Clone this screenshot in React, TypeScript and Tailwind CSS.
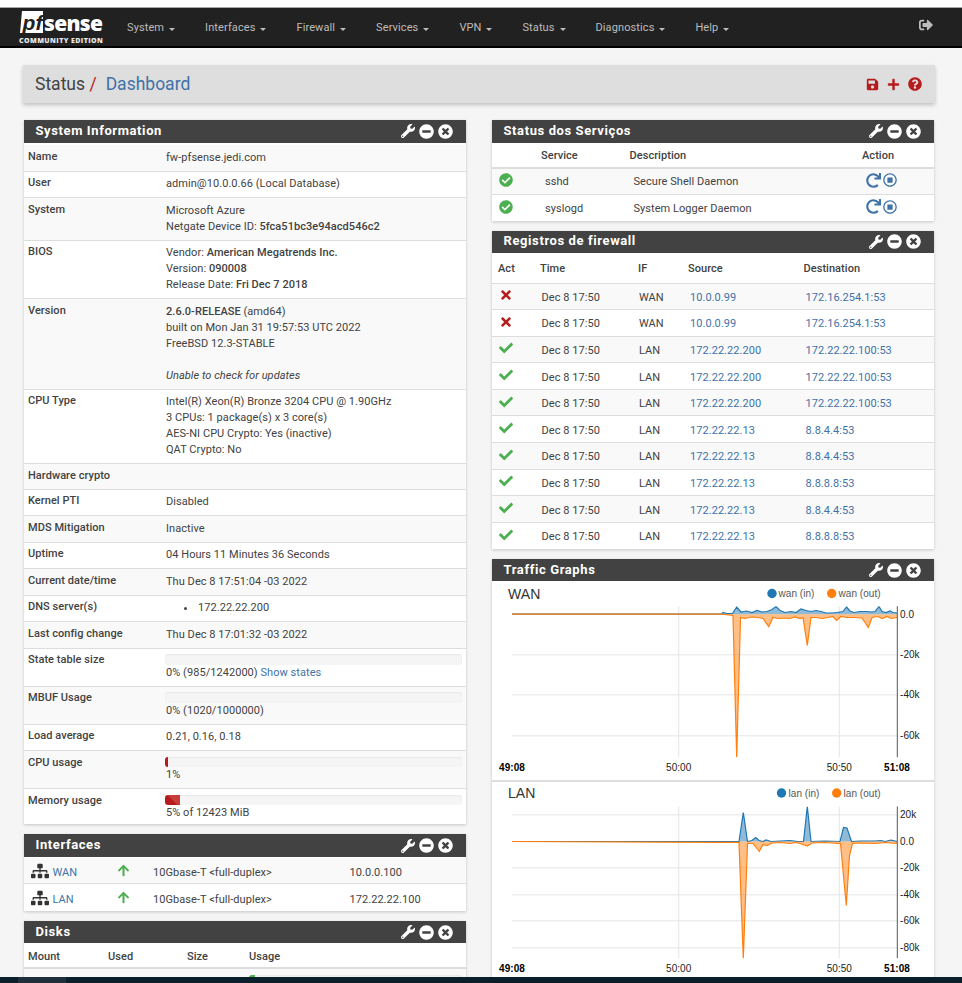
import React from 'react';
import {
  FaWrench, FaMinusCircle, FaTimesCircle, FaSave, FaPlus, FaQuestionCircle, FaCheckCircle,
  FaRedo, FaRegStopCircle, FaTimes, FaCheck, FaArrowUp, FaSitemap, FaSignOutAlt,
} from 'react-icons/fa';

const NAV = ['System', 'Interfaces', 'Firewall', 'Services', 'VPN', 'Status', 'Diagnostics', 'Help'];

type Point = [number, number];

const WAN_IN: Point[] = [
  [512, 613.7], [722, 613.7], [723, 612], [727, 613], [732.5, 613], [736.7, 606.5], [741, 611.5], [746, 610.5],
  [752, 612], [757, 610], [762, 611.5], [767, 611], [772, 609], [776, 606], [780, 610], [785, 612], [791, 611],
  [796, 612], [801, 608.5], [806, 610], [811, 611], [816, 610], [821, 611], [826, 612.5], [832, 612.5], [837, 612],
  [843, 611], [846.5, 606.5], [850, 610.5], [854, 612], [860, 611], [866, 611], [872, 611.5], [875, 611], [879, 606],
  [882, 611], [886, 612], [890, 610.5], [893, 612], [897, 612.5],
];
const WAN_OUT: Point[] = [
  [512, 613.7], [722, 613.7], [733, 615], [736.7, 757], [740.5, 617], [745, 618], [752, 616.5], [758, 617], [763, 618],
  [768.7, 626], [773, 617], [778, 618], [785, 617.5], [790, 618], [795, 616.5], [800, 618], [803, 617], [807.3, 645],
  [811, 617], [816, 617], [822, 618], [828, 617], [833, 616], [836.7, 620], [841, 616], [847, 617], [855, 617],
  [862, 617.5], [868.3, 627], [872, 617], [878, 616], [882, 618], [887, 616], [891, 618], [897, 617],
];
const LAN_IN: Point[] = [
  [512, 841], [739, 841], [743.3, 812], [747.5, 841], [752, 840], [755.7, 837], [759, 840], [763, 841], [766, 839.5],
  [771, 841], [780, 840.5], [790, 840], [798, 841], [803.5, 841], [807.3, 806], [811, 841], [825, 840.5], [840, 841],
  [843.5, 827], [847, 827.5], [851.5, 841], [860, 840.5], [875, 840.5], [881, 840], [885, 841], [891, 839.5], [897, 841],
];
const LAN_OUT: Point[] = [
  [512, 841], [722, 842], [739, 842], [743.3, 958], [747.5, 843], [753, 843], [759.3, 851], [763, 844], [767, 845],
  [772, 842.5], [780, 842], [790, 843], [795, 842], [800, 843], [807.3, 845.5], [812, 842.5], [825, 842], [838, 843],
  [840.5, 843], [846.3, 905], [849.5, 855], [852.5, 843], [860, 842.5], [875, 843], [885, 842], [897, 843],
];

function toLine(points: Point[]) {
  return points.map(([x, y], i) => `${i === 0 ? 'M' : 'L'}${x} ${y}`).join(' ');
}

function toArea(points: Point[], base: number) {
  return `${toLine(points)} L${points[points.length - 1][0]} ${base} L${points[0][0]} ${base} Z`;
}

function PanelTitle({ title }: { title: string }) {
  return (
    <div className="flex h-[22.5px] items-center justify-between bg-[#424242] pl-[11.5px] pr-[13px] text-white">
      <h2 className="pb-[2px] text-[13px] leading-none font-bold tracking-[0.6px]">{title}</h2>
      <div className="flex items-center gap-[4px]">
        <FaWrench size={14} />
        <FaMinusCircle size={15} />
        <FaTimesCircle size={15} />
      </div>
    </div>
  );
}

function Panel({ title, children }: { title: string; children: React.ReactNode }) {
  return (
    <section className="bg-white shadow-[0_1px_3px_rgba(0,0,0,0.2)]">
      <PanelTitle title={title} />
      {children}
    </section>
  );
}

function Bar({ percent, tone = 'bg-[#b71c1c]' }: { percent: number; tone?: string }) {
  return (
    <div className="mt-[1px] -ml-[1px] h-[10.5px] overflow-hidden rounded-[3px] bg-[#f5f5f5] shadow-[inset_0_1px_2px_rgba(0,0,0,0.06)]">
      <div className={`h-full ${tone}`} style={{ width: `${percent}%` }} />
    </div>
  );
}

function InfoRow({ label, odd, children }: { label: string; odd?: boolean; children?: React.ReactNode }) {
  return (
    <div className={`grid grid-cols-[138px_1fr] border-b border-[#ddd] py-[4.75px] pr-[4px] pl-[4px] last:border-b-0 last:pb-[3px] ${odd ? 'bg-[#f9f9f9]' : 'bg-white'}`}>
      <div className="-mt-[1px] font-medium">{label}</div>
      <div>{children}</div>
    </div>
  );
}

function SystemInfo() {
  return (
    <Panel title="System Information">
      <div className="pt-[2.5px]">
        <InfoRow label="Name" odd>fw-pfsense.jedi.com</InfoRow>
        <InfoRow label="User">admin@10.0.0.66 (Local Database)</InfoRow>
        <InfoRow label="System" odd>
          <p>Microsoft Azure</p>
          <p>Netgate Device ID: <strong className="font-medium">5fca51bc3e94acd546c2</strong></p>
        </InfoRow>
        <InfoRow label="BIOS">
          <p>Vendor: <strong className="font-medium">American Megatrends Inc.</strong></p>
          <p>Version: <strong className="font-medium">090008</strong></p>
          <p>Release Date: <strong className="font-medium">Fri Dec 7 2018</strong></p>
        </InfoRow>
        <InfoRow label="Version" odd>
          <p><strong className="font-medium">2.6.0-RELEASE</strong> (amd64)</p>
          <p>built on Mon Jan 31 19:57:53 UTC 2022</p>
          <p>FreeBSD 12.3-STABLE</p>
          <p className="mt-[16px] italic">Unable to check for updates</p>
        </InfoRow>
        <InfoRow label="CPU Type">
          <p>Intel(R) Xeon(R) Bronze 3204 CPU @ 1.90GHz</p>
          <p>3 CPUs: 1 package(s) x 3 core(s)</p>
          <p>AES-NI CPU Crypto: Yes (inactive)</p>
          <p>QAT Crypto: No</p>
        </InfoRow>
        <InfoRow label="Hardware crypto" odd />
        <InfoRow label="Kernel PTI">Disabled</InfoRow>
        <InfoRow label="MDS Mitigation" odd>Inactive</InfoRow>
        <InfoRow label="Uptime">04 Hours 11 Minutes 36 Seconds</InfoRow>
        <InfoRow label="Current date/time" odd>Thu Dec 8 17:51:04 -03 2022</InfoRow>
        <InfoRow label="DNS server(s)">
          <ul className="flex items-center gap-[11px] pl-[18px]">
            <li className="h-[3px] w-[3px] rounded-full bg-[#424242]" />
            <li>172.22.22.200</li>
          </ul>
        </InfoRow>
        <InfoRow label="Last config change" odd>Thu Dec 8 17:01:32 -03 2022</InfoRow>
        <InfoRow label="State table size">
          <Bar percent={0} />
          <p>0% (985/1242000) <a className="text-[#3f72a8]">Show states</a></p>
        </InfoRow>
        <InfoRow label="MBUF Usage" odd>
          <Bar percent={0} />
          <p>0% (1020/1000000)</p>
        </InfoRow>
        <InfoRow label="Load average">0.21, 0.16, 0.18</InfoRow>
        <InfoRow label="CPU usage" odd>
          <Bar percent={1} />
          <p>1%</p>
        </InfoRow>
        <InfoRow label="Memory usage">
          <Bar percent={5} tone="bg-[linear-gradient(45deg,#b71c1c_50%,#c83c3c_50%)]" />
          <p>5% of 12423 MiB</p>
        </InfoRow>
      </div>
    </Panel>
  );
}

function Interfaces() {
  const rows = [
    { name: 'WAN', media: '10Gbase-T <full-duplex>', ip: '10.0.0.100' },
    { name: 'LAN', media: '10Gbase-T <full-duplex>', ip: '172.22.22.100' },
  ];
  return (
    <Panel title="Interfaces">
      <div className="pt-[1px]">
        {rows.map((row, i) => (
          <div key={row.name} className={`grid h-[26.5px] grid-cols-[21.5px_64px_36.5px_196.5px_1fr] items-center border-[#ddd] pl-[7px] ${i === 0 ? 'border-b bg-[#f9f9f9]' : 'bg-white'}`}>
            <FaSitemap size={18} className="text-[#333]" />
            <a className="pt-[4px] text-[#3f72a8]">{row.name}</a>
            <FaArrowUp size={13} className="text-[#4caf50]" />
            <span className="pt-[4px]">{row.media}</span>
            <span className="pt-[4px]">{row.ip}</span>
          </div>
        ))}
      </div>
    </Panel>
  );
}

function Disks() {
  return (
    <Panel title="Disks">
      <table className="w-full table-fixed">
        <thead>
          <tr className="h-[25px] border-b-2 border-[#ddd] text-left">
            <th className="w-[80px] pt-[3px] pl-[4px] font-medium">Mount</th>
            <th className="w-[79px] pt-[3px] pl-[4px] font-medium">Used</th>
            <th className="w-[62px] pt-[3px] pl-[4px] font-medium">Size</th>
            <th className="pt-[3px] pl-[4px] font-medium">Usage</th>
          </tr>
        </thead>
        <tbody>
          <tr className="bg-[#f9f9f9]">
            <td colSpan={3} />
            <td className="pt-[5px] pr-[4px] pb-[16px] pl-[5px]"><Bar percent={3} tone="bg-[#4caf50]" /></td>
          </tr>
        </tbody>
      </table>
    </Panel>
  );
}

function ServiceStatus() {
  const rows = [
    { name: 'sshd', desc: 'Secure Shell Daemon' },
    { name: 'syslogd', desc: 'System Logger Daemon' },
  ];
  return (
    <Panel title="Status dos Serviços">
      <table className="w-full table-fixed">
        <thead>
          <tr className="h-[25px] border-b-2 border-[#ddd] text-left">
            <th className="w-[45px]" />
            <th className="w-[88.5px] pt-[2px] pl-[4px] font-medium">Service</th>
            <th className="w-[232.5px] pt-[2px] pl-[4px] font-medium">Description</th>
            <th className="pt-[2px] pl-[4px] font-medium">Action</th>
          </tr>
        </thead>
        <tbody>
          {rows.map((row, i) => (
            <tr key={row.name} className={`h-[26.5px] ${i === 0 ? 'border-b border-[#ddd] bg-[#f9f9f9]' : 'bg-white'}`}>
              <td className="pl-[7px]"><FaCheckCircle size={14} className="-mt-[2px] text-[#4caf50]" /></td>
              <td className="pt-[2px] pl-[8px]">{row.name}</td>
              <td className="pt-[2px] pl-[8px]">{row.desc}</td>
              <td className="pl-[8px]">
                <div className="-mt-[2px] flex items-center gap-[2px] text-[#3f72a8]">
                  <FaRedo size={15} />
                  <FaRegStopCircle size={14} />
                </div>
              </td>
            </tr>
          ))}
        </tbody>
      </table>
    </Panel>
  );
}

function FirewallLog() {
  const rows = [
    ['b', 'WAN', '10.0.0.99', '172.16.254.1:53'],
    ['b', 'WAN', '10.0.0.99', '172.16.254.1:53'],
    ['p', 'LAN', '172.22.22.200', '172.22.22.100:53'],
    ['p', 'LAN', '172.22.22.200', '172.22.22.100:53'],
    ['p', 'LAN', '172.22.22.200', '172.22.22.100:53'],
    ['p', 'LAN', '172.22.22.13', '8.8.4.4:53'],
    ['p', 'LAN', '172.22.22.13', '8.8.4.4:53'],
    ['p', 'LAN', '172.22.22.13', '8.8.8.8:53'],
    ['p', 'LAN', '172.22.22.13', '8.8.4.4:53'],
    ['p', 'LAN', '172.22.22.13', '8.8.8.8:53'],
  ];
  return (
    <Panel title="Registros de firewall">
      <table className="w-full table-fixed">
        <thead>
          <tr className="h-[30px] text-left">
            <th className="w-[44px] pt-[2px] pl-[6px] font-medium">Act</th>
            <th className="w-[98px] pt-[2px] pl-[4px] font-medium">Time</th>
            <th className="w-[50px] pt-[2px] pl-[4px] font-medium">IF</th>
            <th className="w-[115.5px] pt-[2px] pl-[4px] font-medium">Source</th>
            <th className="pt-[2px] pl-[4px] font-medium">Destination</th>
          </tr>
        </thead>
        <tbody>
          {rows.map((row, i) => (
            <tr key={i} className={`h-[26.6px] border-t border-[#ddd] ${i % 2 === 0 ? 'bg-[#f9f9f9]' : 'bg-white'}`}>
              <td className="pl-[7px]">
                {row[0] === 'b'
                  ? <FaTimes size={14} className="-mt-[2px] text-[#b71c1c]" />
                  : <FaCheck size={14} className="-mt-[2px] text-[#4caf50]" />}
              </td>
              <td className="pt-[3px] pl-[5.5px]">Dec 8 17:50</td>
              <td className="pt-[3px] pl-[5px]">{row[1]}</td>
              <td className="pt-[3px] pl-[6px] text-[#3f72a8]">{row[2]}</td>
              <td className="pt-[3px] pl-[6px] text-[#3f72a8]">{row[3]}</td>
            </tr>
          ))}
        </tbody>
      </table>
    </Panel>
  );
}

type GraphProps = {
  title: string;
  viewY: number;
  height: number;
  top: number;
  bottom: number;
  zero: number;
  ticks: [string, number][];
  inPoints: Point[];
  outPoints: Point[];
  legendY: number;
  legend: { label: string; dot: number; x: number; color: string }[];
};

function Graph({ title, viewY, height, top, bottom, zero, ticks, inPoints, outPoints, legendY, legend }: GraphProps) {
  const clip = `clip-${title}`;
  return (
    <svg className="block" width={442} height={height} viewBox={`492 ${viewY} 442 ${height}`} fontFamily="'Liberation Sans', Arial, sans-serif" fontSize="10">
      <defs>
        <clipPath id={clip}><rect x={512} y={top} width={386} height={bottom - top} /></clipPath>
      </defs>
      <text x={508} y={legendY + 5} fontSize="14" fill="#333">{title}</text>
      {legend.map((item) => (
        <g key={item.label}>
          <circle cx={item.dot} cy={legendY} r={4.7} fill={item.color} />
          <text x={item.x} y={legendY + 3.5} fill="#555">{item.label}</text>
        </g>
      ))}
      {ticks.map(([label, y]) => (
        <g key={label}>
          {label !== '0.0' && <line x1={512} x2={897} y1={y} y2={y} stroke="#e5e5e5" />}
          <text x={900} y={y + 3.5} fill="#222">{label}</text>
        </g>
      ))}
      {[678.7, 839.3].map((x) => (
        <line key={x} x1={x} x2={x} y1={top} y2={bottom} stroke="#e5e5e5" />
      ))}
      <g clipPath={`url(#${clip})`}>
        <path d={toArea(inPoints, zero)} fill="#1f77b4" fillOpacity={0.5} />
        <path d={toLine(inPoints)} fill="none" stroke="#1f77b4" strokeWidth={1.2} />
        <path d={toArea(outPoints, zero)} fill="#ff7f0e" fillOpacity={0.5} />
        <path d={toLine(outPoints)} fill="none" stroke="#ff7f0e" strokeWidth={1.2} />
      </g>
      <line x1={897.3} x2={897.3} y1={top} y2={bottom} stroke="#555" />
      <text x={512} y={bottom + 13.5} textAnchor="middle" fontWeight="bold" fill="#000">49:08</text>
      <text x={678.7} y={bottom + 13.5} textAnchor="middle" fill="#222">50:00</text>
      <text x={839.3} y={bottom + 13.5} textAnchor="middle" fill="#222">50:50</text>
      <text x={897} y={bottom + 13.5} textAnchor="middle" fontWeight="bold" fill="#000">51:08</text>
    </svg>
  );
}

function TrafficGraphs() {
  return (
    <Panel title="Traffic Graphs">
      <div className="border-b-2 border-[#ddd]">
        <Graph
          title="WAN"
          viewY={580.5}
          height={199}
          top={605.7}
          bottom={756.7}
          zero={613.7}
          ticks={[['0.0', 613.7], ['-20k', 654.3], ['-40k', 694.3], ['-60k', 735.3]]}
          inPoints={WAN_IN}
          outPoints={WAN_OUT}
          legendY={593}
          legend={[
            { label: 'wan (in)', dot: 772, x: 778.5, color: '#1f77b4' },
            { label: 'wan (out)', dot: 831.7, x: 838.5, color: '#ff7f0e' },
          ]}
        />
      </div>
      <Graph
        title="LAN"
        viewY={781.5}
        height={196}
        top={806}
        bottom={957.7}
        zero={841}
        ticks={[['20k', 814.3], ['0.0', 841], ['-20k', 867.3], ['-40k', 894.3], ['-60k', 920.3], ['-80k', 947.3]]}
        inPoints={LAN_IN}
        outPoints={LAN_OUT}
        legendY={792.5}
        legend={[
          { label: 'lan (in)', dot: 781.5, x: 788.5, color: '#1f77b4' },
          { label: 'lan (out)', dot: 836.7, x: 843.5, color: '#ff7f0e' },
        ]}
      />
    </Panel>
  );
}

function Logo() {
  return (
    <svg width={88} height={34} viewBox="0 0 88 34" className="block">
      <polygon points="4,1 25,1 25,23 2,23" fill="#fff" />
      <text x={4.5} y={20} fontFamily="'Liberation Sans', sans-serif" fontSize="21" fontWeight="bold" fontStyle="italic" fill="#212121">pf</text>
      <text x={26} y={21} fontFamily="'Open Sans', sans-serif" fontSize="21" fontWeight="800" fill="#fff" textLength={59}>sense</text>
      <text x={1} y={32.5} fontFamily="'Open Sans', sans-serif" fontSize="7" fontWeight="800" fill="#e8e8e8" textLength={84}>COMMUNITY EDITION</text>
    </svg>
  );
}

export default function App() {
  return (
    <div className="relative h-[983px] overflow-hidden bg-[#f5f5f5] [font-family:Roboto,sans-serif] text-[11px] leading-[16px] tracking-[0.05px] text-[#424242]">
      <div className="h-[7px] bg-white" />
      <nav className="flex h-[41px] items-center border-t border-b-2 border-t-[#aaa] border-b-black bg-[#212121] pr-[29px] pl-[18px] text-[#bdbdbd]">
        <Logo />
        <ul className="mt-[2px] ml-[21px] flex gap-[30px] tracking-[0.1px]">
          {NAV.map((item) => (
            <li key={item} className="flex items-center gap-[5px]">
              {item}
              <span className="mt-[2px] border-x-[3.5px] border-t-[3.5px] border-x-transparent border-t-[#bdbdbd]" />
            </li>
          ))}
        </ul>
        <FaSignOutAlt size={14} className="mt-[-4px] ml-auto" />
      </nav>

      <header className="mt-[17px] ml-[23px] flex h-[38px] w-[912px] items-center justify-between bg-[#dedede] pr-[13px] pl-[12px] shadow-[0_2px_4px_rgba(0,0,0,0.22)]">
        <h1 className="text-[17.5px] tracking-normal">
          Status <span className="text-[#b71c1c]">/</span>
          <a className="ml-[9px] text-[#3f72a8]">Dashboard</a>
        </h1>
        <div className="flex items-center gap-[8px] text-[#b71c1c]">
          <FaSave size={13} />
          <FaPlus size={13} />
          <FaQuestionCircle size={14} />
        </div>
      </header>

      <main className="mx-[24px] mt-[17px] grid grid-cols-[442px_442px] gap-x-[26px]">
        <div className="flex flex-col gap-[10px]">
          <SystemInfo />
          <Interfaces />
          <Disks />
        </div>
        <div className="flex flex-col gap-[10px]">
          <ServiceStatus />
          <FirewallLog />
          <TrafficGraphs />
        </div>
      </main>

      {/* taskbar edge of the captured window */}
      <div className="absolute right-0 bottom-0 left-0 h-[6px] bg-[#0a1f2c]">
        <div className="ml-[18px] h-full w-[48px] bg-[#1e303c]" />
      </div>
    </div>
  );
}
